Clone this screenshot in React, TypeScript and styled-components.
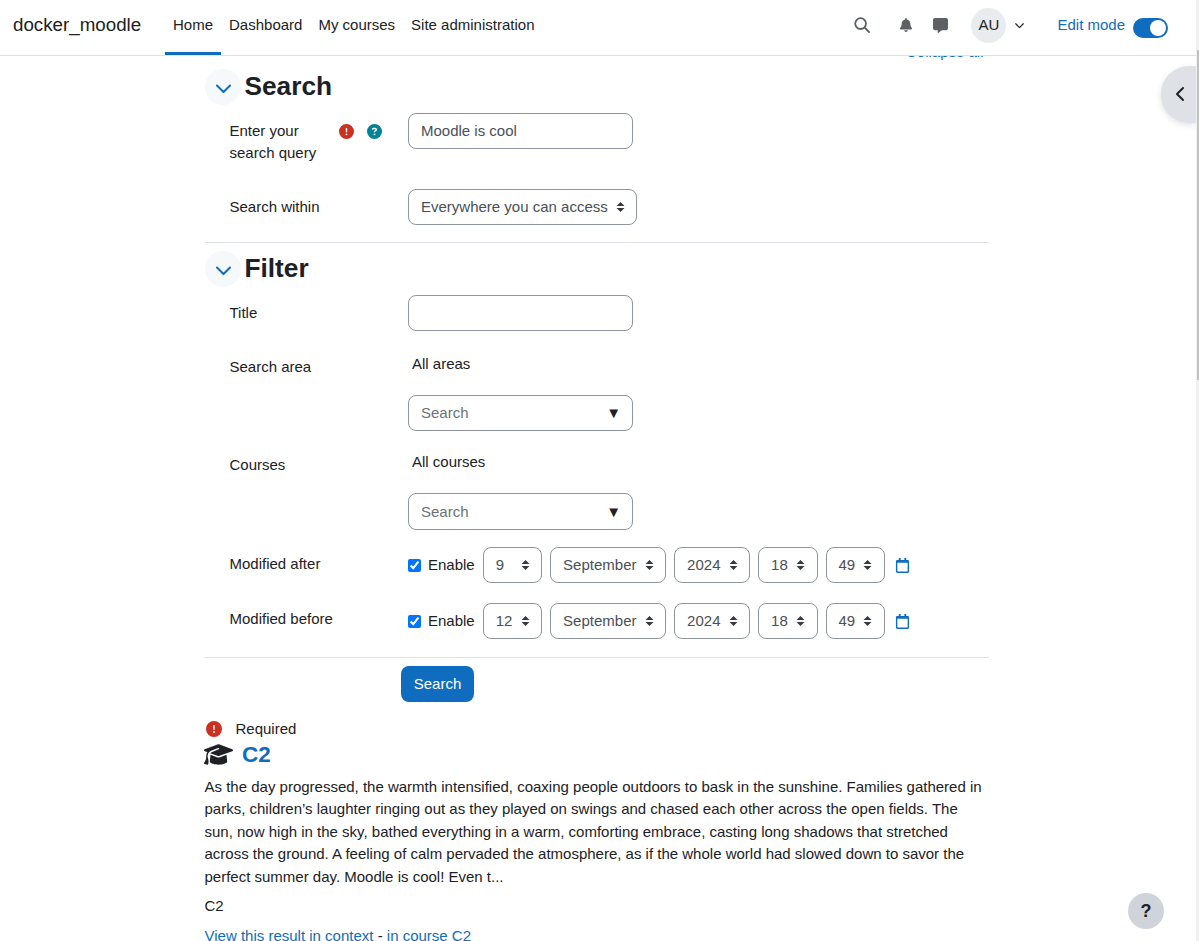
import React from "react";
import styled, { createGlobalStyle } from "styled-components";
import { FaBell, FaCommentAlt, FaRegCalendar } from "react-icons/fa";
import { FaCircleExclamation, FaCircleQuestion, FaGraduationCap } from "react-icons/fa6";

const blue = "#0f6cbf";
const ink = "#1d2125";

const GlobalStyle = createGlobalStyle`
  html, body { margin: 0; padding: 0; height: 100%; overflow: hidden; }
  body {
    font-family: "Liberation Sans", Arial, sans-serif;
    font-size: 15px;
    line-height: 22.5px;
    color: ${ink};
    background: #fff;
  }
  * { box-sizing: border-box; }
`;

const ChevronDown = ({ size = 19 }: { size?: number }) => (
  <svg width={size} height={size} viewBox="0 0 16 16" fill="none" stroke="currentColor" strokeWidth="1.7" strokeLinecap="round" strokeLinejoin="round">
    <path d="M2.5 5.5 8 11l5.5-5.5" />
  </svg>
);

const SelectArrows = () => (
  <svg width="9" height="10" viewBox="0 0 9 10" fill="#343a40">
    <path d="M4.5 0 8.5 4H.5zM4.5 10 .5 6h8z" />
  </svg>
);

const DateRow = ({ day }: { day: string }) => (
  <DateFields>
    <CheckLabel>
      <Check type="checkbox" defaultChecked />
      Enable
    </CheckLabel>
    <Select $w={59.4}>{day}<SelectArrows /></Select>
    <Select $w={116}>September<SelectArrows /></Select>
    <Select $w={76}>2024<SelectArrows /></Select>
    <Select $w={59.4}>18<SelectArrows /></Select>
    <Select $w={59.4}>49<SelectArrows /></Select>
    <CalendarLink><FaRegCalendar size={15} /></CalendarLink>
  </DateFields>
);

const App = () => {
  return (
    <>
      <GlobalStyle />
      <Page>
        <Navbar>
          <Brand>docker_moodle</Brand>
          <NavLinks>
            <NavLink $active>Home</NavLink>
            <NavLink>Dashboard</NavLink>
            <NavLink>My courses</NavLink>
            <NavLink>Site administration</NavLink>
          </NavLinks>
          <NavRight>
            <SearchIcon>
              <svg width="16" height="16" viewBox="0 0 16 16" fill="none" stroke="currentColor" strokeWidth="1.8" strokeLinecap="round">
                <circle cx="6.6" cy="6.6" r="5.4" />
                <path d="m10.7 10.7 4.3 4.3" />
              </svg>
            </SearchIcon>
            <NavIcon><FaBell size={14} /></NavIcon>
            <NavIcon><FaCommentAlt size={15} /></NavIcon>
            <Avatar>AU</Avatar>
            <UserCaret><ChevronDown size={11} /></UserCaret>
            <EditMode>Edit mode</EditMode>
            <Toggle />
          </NavRight>
        </Navbar>

        <Body>
          <Content>
            <CollapseAll>Collapse all</CollapseAll>
            <SectionHead>
              <Collapser><ChevronDown /></Collapser>
              <SectionTitle>Search</SectionTitle>
            </SectionHead>

            <FormRow $h={76}>
              <Label>
                <LabelText>Enter your search query</LabelText>
                <LabelIcons>
                  <FaCircleExclamation size={15} color="#ca3120" />
                  <FaCircleQuestion size={15} color="#008196" />
                </LabelIcons>
              </Label>
              <TextField>Moodle is cool</TextField>
            </FormRow>
            <FormRow $h={61}>
              <Label><LabelText>Search within</LabelText></Label>
              <Select $w={229}>Everywhere you can access<SelectArrows /></Select>
            </FormRow>

            <Rule />

            <SectionHead $spaced>
              <Collapser><ChevronDown /></Collapser>
              <SectionTitle>Filter</SectionTitle>
            </SectionHead>

            <FormRow $h={54}>
              <Label><LabelText>Title</LabelText></Label>
              <TextField />
            </FormRow>
            <FormRow $h={98}>
              <Label><LabelText>Search area</LabelText></Label>
              <Stack>
                <NoSelection>All areas</NoSelection>
                <SearchBox>Search<Caret>▼</Caret></SearchBox>
              </Stack>
            </FormRow>
            <FormRow $h={100}>
              <Label><LabelText>Courses</LabelText></Label>
              <Stack>
                <NoSelection>All courses</NoSelection>
                <SearchBox $tall>Search<Caret>▼</Caret></SearchBox>
              </Stack>
            </FormRow>
            <FormRow $h={56}>
              <Label><LabelText $lift={1}>Modified after</LabelText></Label>
              <DateRow day="9" />
            </FormRow>
            <FormRow $h={62}>
              <Label><LabelText $lift={2}>Modified before</LabelText></Label>
              <DateRow day="12" />
            </FormRow>

            <Rule />

            <SubmitRow>
              <SubmitButton>Search</SubmitButton>
            </SubmitRow>

            <RequiredNote>
              <FaCircleExclamation size={16} color="#ca3120" />
              Required
            </RequiredNote>

            <ResultTitle>
              <CapIcon><FaGraduationCap size={29} color={ink} /></CapIcon>
              <ResultLink>C2</ResultLink>
            </ResultTitle>
            <Paragraph>
              As the day progressed, the warmth intensified, coaxing people outdoors to bask in the sunshine. Families gathered in parks, children’s laughter ringing out as they played on swings and chased each other across the open fields. The sun, now high in the sky, bathed everything in a warm, comforting embrace, casting long shadows that stretched across the ground. A feeling of calm pervaded the atmosphere, as if the whole world had slowed down to savor the perfect summer day. Moodle is cool! Even t...
            </Paragraph>
            <CourseName>C2</CourseName>
            <ResultLinks>
              <a>View this result in context</a> - <a>in course C2</a>
            </ResultLinks>
          </Content>

          <DrawerToggle>
            <svg width="12" height="16" viewBox="0 0 12 16" fill="none" stroke="currentColor" strokeWidth="2" strokeLinecap="round" strokeLinejoin="round">
              <path d="M9 2 3 8l6 6" />
            </svg>
          </DrawerToggle>
          <HelpButton>?</HelpButton>
        </Body>
        <Scrollbar><ScrollThumb /></Scrollbar>
      </Page>
    </>
  );
};

export default App;

const Page = styled.div`
  position: relative;
  width: 100%;
  height: 100vh;
  overflow: hidden;
  display: flex;
  flex-direction: column;
`;

const Navbar = styled.nav`
  height: 56px;
  flex: none;
  display: flex;
  align-items: stretch;
  padding: 0 31px 0 13px;
  border-bottom: 1px solid #dee2e6;
  background: #fff;
  position: relative;
  z-index: 1;
`;

const Brand = styled.div`
  font-size: 18.75px;
  line-height: 50px;
  width: 152px;
`;

const NavLinks = styled.div`
  display: flex;
`;

const NavLink = styled.a<{ $active?: boolean }>`
  height: 55px;
  line-height: 50px;
  padding: 0 8px;
  border-bottom: 3px solid ${(p) => (p.$active ? blue : "transparent")};
`;

const NavRight = styled.div`
  margin-left: auto;
  display: flex;
  align-items: center;
  padding-bottom: 5px;
`;

const SearchIcon = styled.span`
  display: flex;
  color: #5b5f64;
  margin-right: 29px;
`;

const NavIcon = styled.span`
  display: flex;
  color: #5d6166;
  margin-right: 20px;
`;

const Avatar = styled.div`
  width: 35px;
  height: 35px;
  border-radius: 50%;
  background: #e9ecef;
  display: flex;
  align-items: center;
  justify-content: center;
  margin-left: 3px;
`;

const UserCaret = styled.span`
  display: flex;
  margin-left: 8px;
  margin-right: 32px;
`;

const EditMode = styled.span`
  color: ${blue};
  margin-right: 8px;
`;

const Toggle = styled.span`
  position: relative;
  top: 3px;
  width: 35px;
  height: 20px;
  border-radius: 10px;
  background: ${blue};
  &::after {
    content: "";
    position: absolute;
    top: 2px;
    right: 2px;
    width: 16px;
    height: 16px;
    border-radius: 50%;
    background: #fff;
  }
`;

const Body = styled.main`
  flex: 1;
  min-height: 0;
  overflow: hidden;
  position: relative;
`;

const Content = styled.div`
  width: 784px;
  margin-left: 204.5px;
`;

const CollapseAll = styled.div`
  height: 13px;
  margin-top: -15px;
  margin-bottom: 15px;
  line-height: 22.5px;
  font-size: 15px;
  color: ${blue};
  text-align: right;
  padding-right: 5px;
`;

const SectionHead = styled.div<{ $spaced?: boolean }>`
  display: flex;
  align-items: center;
  height: 36px;
  gap: 4px;
  margin-top: ${(p) => (p.$spaced ? 8 : 0)}px;
`;

const Collapser = styled.span`
  width: 36px;
  height: 36px;
  border-radius: 50%;
  background: #f5f9fc;
  color: ${blue};
  display: flex;
  align-items: center;
  justify-content: center;
  padding: 2px 0 0 2px;
`;

const SectionTitle = styled.h3`
  margin: 0;
  padding-bottom: 2px;
  font-size: 26.25px;
  line-height: 34px;
  font-weight: 700;
`;

const FormRow = styled.div<{ $h: number }>`
  height: ${(p) => p.$h}px;
  display: flex;
  align-items: flex-start;
  padding-top: 8px;
`;

const Label = styled.div`
  width: 203.5px;
  padding-left: 25px;
  padding-right: 26px;
  display: flex;
  justify-content: space-between;
  align-items: flex-start;
`;

const LabelText = styled.span<{ $lift?: number }>`
  max-width: 100px;
  white-space: normal;
  &:only-child { max-width: none; white-space: nowrap; }
  padding-top: ${(p) => 6.6 - (p.$lift ?? 0)}px;
  display: block;
`;

const LabelIcons = styled.span`
  display: flex;
  gap: 13px;
  padding-top: 11px;
`;

const TextField = styled.div`
  width: 225px;
  height: 36px;
  border: 1px solid #8f959e;
  border-radius: 8px;
  padding: 6px 12px;
  color: #495057;
`;

const Select = styled.div<{ $w: number }>`
  width: ${(p) => p.$w}px;
  height: 36px;
  flex: none;
  border: 1px solid #8f959e;
  border-radius: 8px;
  padding: 0 11.5px 0 12px;
  color: #495057;
  display: flex;
  align-items: center;
  justify-content: space-between;
`;

const Stack = styled.div`
  display: flex;
  flex-direction: column;
`;

const NoSelection = styled.div`
  padding: 4px 4px 0;
  height: 46px;
`;

const SearchBox = styled.div<{ $tall?: boolean }>`
  width: 225px;
  height: ${(p) => (p.$tall ? 37 : 36)}px;
  border: 1px solid #8f959e;
  border-radius: 8px;
  padding: ${(p) => (p.$tall ? 7 : 6)}px 11px 6px 12px;
  color: #6a737b;
  display: flex;
  justify-content: space-between;
`;

const Caret = styled.span`
  color: ${ink};
  font-size: 15px;
`;

const DateFields = styled.div`
  display: flex;
  align-items: center;
  gap: 8px;
`;

const CheckLabel = styled.label`
  display: flex;
  align-items: center;
  gap: 7px;
`;

const Check = styled.input`
  width: 13px;
  height: 13px;
  margin: 0;
`;

const CalendarLink = styled.span`
  display: flex;
  color: ${blue};
  margin-left: 2px;
`;

const Rule = styled.hr`
  margin: 0;
  border: 0;
  border-top: 1px solid #dee2e6;
`;

const SubmitRow = styled.div`
  padding: 8px 0 0 196.5px;
`;

const SubmitButton = styled.button`
  display: block;
  width: 73px;
  height: 36px;
  border: 0;
  border-radius: 8px;
  background: ${blue};
  color: #fff;
  font: inherit;
`;

const RequiredNote = styled.div`
  display: flex;
  align-items: center;
  gap: 14px;
  margin-top: 16px;
  padding-left: 1px;
`;

const ResultTitle = styled.div`
  display: flex;
  align-items: center;
  gap: 9px;
  height: 30px;
`;

const CapIcon = styled.span`
  display: flex;
  margin: -3px 0 0 -0.5px;
`;

const ResultLink = styled.a`
  color: ${blue};
  font-size: 22.5px;
  font-weight: 700;
`;

const Paragraph = styled.p`
  margin: 5px 0 7px;
`;

const CourseName = styled.div`
  margin-bottom: 7px;
`;

const ResultLinks = styled.div`
  a { color: ${blue}; }
`;

const DrawerToggle = styled.div`
  position: absolute;
  top: 10px;
  right: 3px;
  width: 35px;
  height: 57px;
  border-radius: 28px 0 0 28px;
  background: #dee2e6;
  color: ${ink};
  display: flex;
  align-items: center;
  padding: 0 0 1px 13px;
  box-shadow: 0 2px 6px rgba(0, 0, 0, 0.12);
`;

const HelpButton = styled.div`
  position: absolute;
  right: 35px;
  bottom: 12px;
  width: 36px;
  height: 36px;
  border-radius: 50%;
  background: #ced4da;
  display: flex;
  align-items: center;
  justify-content: center;
  font-weight: 700;
  font-size: 18px;
`;

const Scrollbar = styled.div`
  position: absolute;
  top: 0;
  right: 0;
  bottom: 0;
  width: 3px;
  background: #f1f1f1;
  display: flex;
  justify-content: flex-end;
  z-index: 2;
`;

const ScrollThumb = styled.div`
  width: 2px;
  height: 330px;
  margin-top: 50px;
  background: #c1c1c1;
`;
